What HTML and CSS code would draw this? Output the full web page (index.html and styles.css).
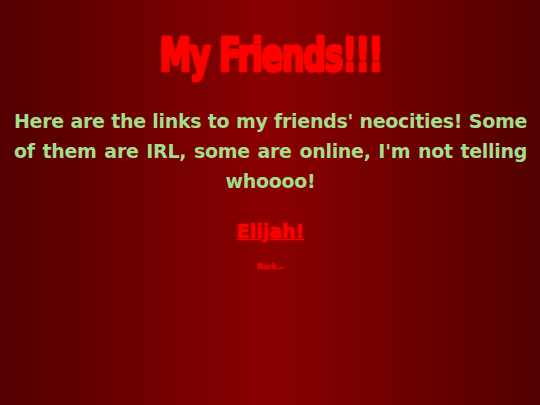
FILE: index.html
```html
<!DOCTYPE html>
<html>
<head>
<meta charset="utf-8">
<link rel="stylesheet" href="styles.css">
</head>
<body>
<main class="page">
  <h1 class="title">My Friends!!!</h1>
  <p class="intro"><span class="line">Here are the links to my friends' neocities! Some</span><span class="line">of them are IRL, some are online, I'm not telling</span><span class="line last">whoooo!</span></p>
  <a class="friend" href="#">Elijah!</a>
  <a class="back" href="#">Back...</a>
</main>
</body>
</html>
```
FILE: styles.css
```css
html, body {
  margin: 0;
  padding: 0;
  height: 100%;
}
body {
  background: linear-gradient(to right, #520000 0%, #8a0000 50%, #520000 100%);
}
.page {
  display: flex;
  flex-direction: column;
  align-items: center;
  padding: 29px 13px 0 14px;
}
.title {
  margin: 0;
  font-family: "DejaVu Sans Condensed", "DejaVu Sans", sans-serif;
  font-stretch: condensed;
  font-weight: bold;
  font-size: 44px;
  line-height: 54px;
  letter-spacing: -1.5px;
  color: #ff0000;
  -webkit-text-stroke: 2.5px #ff0000;
  text-shadow: 0 0 4px #ff2a00;
  transform: scale(0.8, 1.03);
}
.intro {
  margin: 23px 0 0 0;
  width: 100%;
  font-family: "DejaVu Sans", sans-serif;
  font-weight: bold;
  font-size: 19px;
  line-height: 30px;
  color: #a4de8c;
  letter-spacing: -0.3px;
}
.line {
  display: block;
  text-align: justify;
  text-align-last: justify;
}
.line.last {
  text-align: center;
  text-align-last: center;
}
.friend {
  margin-top: 23px;
  font-family: "DejaVu Sans", sans-serif;
  font-weight: bold;
  font-size: 19px;
  line-height: 24px;
  color: #ff0000;
  text-decoration: underline;
  text-shadow: 0 0 3px #ff0000;
}
.back {
  margin-top: 17px;
  font-family: "Liberation Serif", serif;
  font-weight: bold;
  font-size: 9px;
  line-height: 12px;
  color: #ee0000;
  text-decoration: none;
  text-shadow: 0 0 2px #ff0000;
}
```
